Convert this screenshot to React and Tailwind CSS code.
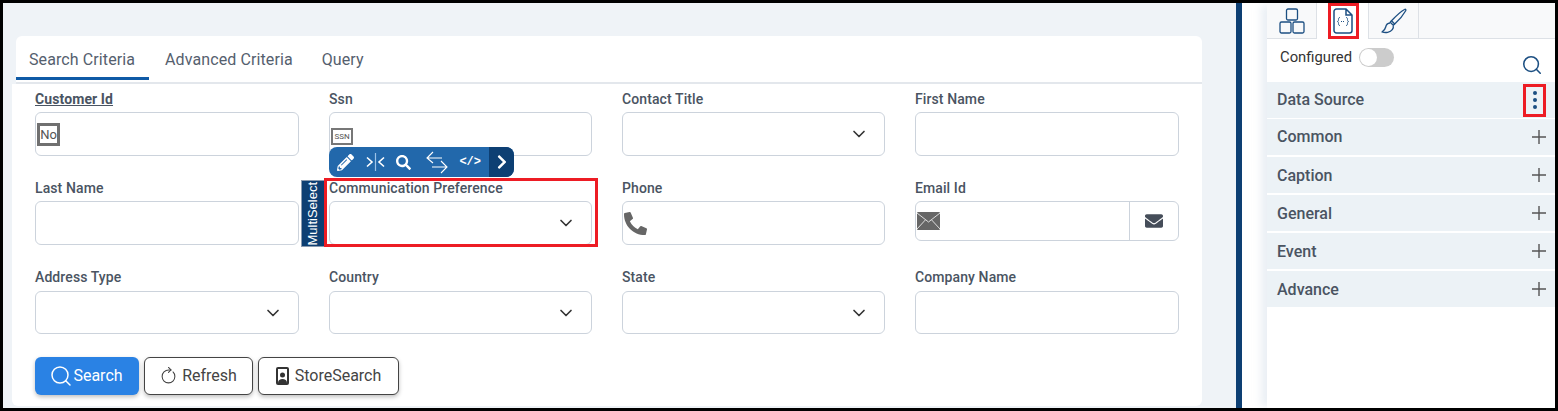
import React from 'react';
import { FaPencilAlt, FaSearch, FaChevronRight, FaEnvelope, FaPhoneAlt } from 'react-icons/fa';
import { LuChevronDown, LuSearch, LuRotateCw } from 'react-icons/lu';

const NoBox = () => (
  <span className="ml-[1px] mt-[1px] flex h-[23px] w-[23px] items-center justify-center border-[3px] border-[#707070] bg-white text-[13px] leading-none text-[#555]">
    No
  </span>
);

const SsnBox = () => (
  <span className="ml-[1px] mt-[5px] flex h-[17px] w-[22px] items-center justify-center border-2 border-[#777] bg-white text-[8px] leading-none text-[#555]">
    SSN
  </span>
);

const PhoneIcon = () => (
  <FaPhoneAlt className="ml-[1px] mt-[1px] h-[23px] w-[23px] text-[#666]" />
);

const MailIcon = () => (
  <svg className="ml-[1px] h-[18px] w-[23px]" viewBox="0 0 23 18">
    <rect width="23" height="18" rx="1" fill="#666" />
    <path d="M0 1l11.500 9L23 1M0 17l8.500-9.200M23 17l-8.500-9.200" stroke="#ddd" strokeWidth="1" fill="none" />
  </svg>
);

const Chevron = () => (
  <LuChevronDown className="absolute right-[15px] top-1/2 h-[20px] w-[20px] -translate-y-1/2 text-[#333]" />
);

const fields = [
  { label: 'Customer Id', h: 'h-[44px]', icon: <NoBox />, bold: true },
  { label: 'Ssn', h: 'h-[44px]', icon: <SsnBox /> },
  { label: 'Contact Title', h: 'h-[44px]', select: true },
  { label: 'First Name', h: 'h-[44px]' },
  { label: 'Last Name', h: 'h-[44px]' },
  { label: 'Communication Preference', h: 'h-[44px]', select: true },
  { label: 'Phone', h: 'h-[44px]', icon: <PhoneIcon /> },
  { label: 'Email Id', h: 'h-[44px]', email: true },
  { label: 'Address Type', h: 'h-[43px]', select: true, tall: true },
  { label: 'Country', h: 'h-[43px]', select: true, tall: true },
  { label: 'State', h: 'h-[43px]', select: true, tall: true },
  { label: 'Company Name', h: 'h-[43px]', tall: true },
];

const Field = ({ field }) => (
  <div>
    <div
      className={`pt-[4px] text-[14px] leading-[18px] tracking-[0.1px] text-[#4a5462] ${
        field.tall ? 'h-[27px]' : 'h-[26px]'
      } ${field.bold ? 'font-bold underline' : 'font-medium'}`}
    >
      {field.label}
    </div>
    {field.email ? (
      <div className="flex h-[40px] rounded-md border border-[#ccd3dc] bg-white">
        <div className="flex flex-1 items-center border-r border-[#ccd3dc]">
          <MailIcon />
        </div>
        <div className="flex w-[48px] items-center justify-center">
          <FaEnvelope className="h-[18px] w-[18px] text-[#454d59]" />
        </div>
      </div>
    ) : (
      <div className={`relative flex items-center rounded-md border border-[#ccd3dc] bg-white ${field.h}`}>
        {field.icon}
        {field.select && <Chevron />}
      </div>
    )}
  </div>
);

const ElementToolbar = () => (
  <div className="absolute left-[326px] top-[144px] flex h-[30px] w-[185px] overflow-hidden rounded-[8px] bg-[#2268ab] text-white">
    <div className="flex flex-1 items-center justify-between pl-[8px] pr-[8px]">
      <FaPencilAlt className="h-[17px] w-[17px]" />
      <svg className="h-[20px] w-[19px]" viewBox="0 0 19 20" fill="none" stroke="white" strokeWidth="1.6">
        <path d="M1 5.500l5 4.500-5 4.500M18 5.500l-5 4.500 5 4.500" />
        <path d="M9.500 1v18" stroke="#9cc3e8" strokeWidth="1.2" />
      </svg>
      <FaSearch className="h-[15px] w-[15px]" />
      <svg className="ml-[3px] h-[26px] w-[22px]" viewBox="0 0 22 26" fill="none" stroke="white" strokeWidth="1.1">
        <path d="M7 3L1 9l6 5M1 9h15M15 12l6 6-6 6M21 18H6" />
      </svg>
      <span className="font-mono text-[12px] font-bold leading-none">&lt;/&gt;</span>
    </div>
    <div className="flex w-[25px] items-center justify-center bg-[#0d3f73]">
      <FaChevronRight className="h-[16px] w-[12px]" />
    </div>
  </div>
);

const panelRows = ['Data Source', 'Common', 'Caption', 'General', 'Event', 'Advance'];

const SidePanel = () => (
  <div className="relative flex w-[288px] flex-col bg-white shadow-[-8px_0_8px_-2px_rgba(225,232,240,0.7)]">
    <div className="flex h-[36px] border-b border-[#dde1e6] bg-[#f8f9fa]">
      <div className="flex w-[50px] items-center justify-center border-r border-[#dde1e6]">
        <svg className="h-[26px] w-[26px]" viewBox="0 0 26 26" fill="none" stroke="#1c4f82" strokeWidth="1.3">
          <rect x="7.500" y="1" width="11" height="11" rx="1.500" />
          <rect x="1" y="14" width="11" height="11" rx="1.500" />
          <rect x="14" y="14" width="11" height="11" rx="1.500" />
        </svg>
      </div>
      <div className="flex h-[36px] w-[52px] items-center justify-center border-r border-[#dde1e6] bg-white">
        <svg className="mt-[-1px] h-[26px] w-[20px]" viewBox="0 0 20 26" fill="none" stroke="#1c4f82" strokeWidth="1.500">
          <path d="M3.500 1H13l6 6v15.500a2.500 2.500 0 0 1-2.500 2.500h-13A2.500 2.500 0 0 1 1 22.500v-19A2.500 2.500 0 0 1 3.500 1zM13 1v6h6" />
          <path d="M7 9.500c-1.500 0-1.500 1-1.500 2 0 1.500-.5 2-1 2 .5 0 1 .5 1 2 0 1 0 2 1.500 2M13 9.500c1.500 0 1.500 1 1.500 2 0 1.500.5 2 1 2-.5 0-1 .5-1 2 0 1 0 2-1.500 2" strokeWidth="0.9" />
          <path d="M8 13.500h4" strokeWidth="1" strokeDasharray="1 1" />
        </svg>
      </div>
      <div className="flex w-[50px] items-center justify-center border-r border-[#dde1e6]">
        <svg className="h-[26px] w-[26px]" viewBox="0 0 26 26" fill="none" stroke="#1c4f82" strokeWidth="1.300" strokeLinejoin="round">
          <path d="M23.500 1.500c1-.6 1.800.2 1.200 1.200-2 3.600-6.500 9.200-11 13.300l-3.200-3.200c4.200-4.500 9.400-9.300 13-11.300z" />
          <path d="M10.500 12.800l-1.300 1.400 3.100 3.100 1.400-1.300" />
          <path d="M9 15c-2.800.3-3.900 2-4.300 4-.3 1.600-1.500 3.400-3.700 5 3.500 1 8.300.6 10.300-2.300 1-1.500 1.200-3.100.9-4" />
        </svg>
      </div>
    </div>
    <div className="relative h-[43px]">
      <div className="flex items-center pl-[13px] pt-[8px]">
        <span className="text-[14.800px] leading-[20px] text-[#333]">Configured</span>
        <span className="ml-[7px] flex h-[19px] w-[35px] items-center rounded-full bg-[#cccccc] pl-[1px]">
          <span className="h-[17px] w-[17px] rounded-full bg-white" />
        </span>
      </div>
      <LuSearch className="absolute right-[12px] top-[15px] h-[22px] w-[22px] text-[#1c4f82]" strokeWidth={1.700} />
    </div>
    {panelRows.map((row, i) => (
      <div
        key={row}
        className={`flex h-[36px] items-center justify-between bg-[#ecf2f6] pl-[10px] pr-[9px] text-[16px] font-medium text-[#4a5462] ${
          i === 0 ? 'mb-[1px]' : 'mb-[2px]'
        }`}
      >
        <span className={i >= 2 ? 'pt-[2px]' : ''}>{row}</span>
        {i === 0 ? (
          <span className="mr-[9px] flex flex-col gap-[3px]">
            <span className="h-[4px] w-[4px] rounded-full bg-[#1c4f82]" />
            <span className="h-[4px] w-[4px] rounded-full bg-[#1c4f82]" />
            <span className="h-[4px] w-[4px] rounded-full bg-[#1c4f82]" />
          </span>
        ) : (
          <svg className="h-[14px] w-[14px]" viewBox="0 0 14 14" stroke="#555" strokeWidth="1.400">
            <path d="M7 0v14M0 7h14" />
          </svg>
        )}
      </div>
    ))}
    {/* red call-outs on the panel */}
    <div className="pointer-events-none absolute left-[61px] top-0 h-[36px] w-[31px] border-[3px] border-[#ed1c24]" />
    <div className="pointer-events-none absolute left-[256px] top-[81px] h-[33px] w-[23px] border-[3px] border-[#ed1c24]" />
  </div>
);

export default function App() {
  return (
    <div className="relative flex h-[411px] w-[1558px] overflow-hidden border-[3px] border-black font-['Roboto',sans-serif]">
      <div className="flex w-[1233px] bg-[#eff3f7] pl-[9px] pt-[33px]">
        <div className="w-[1190px]">
          <div className="ml-[4px] flex h-[48px] rounded-t-md border-b-2 border-[#e3e7ec] bg-white">
            {['Search Criteria', 'Advanced Criteria', 'Query'].map((tab, i) => (
              <div
                key={tab}
                className={`mr-[3px] flex h-[44px] items-center border-b-[3px] pl-[13px] pt-[7px] text-[16px] tracking-[0.1px] text-[#55606e] ${
                  i === 0 ? 'border-[#0f5aa6] pr-[14px]' : 'border-transparent pr-[13px]'
                }`}
              >
                {tab}
              </div>
            ))}
          </div>
          <div className="h-[322px] rounded-b-md bg-white pl-[23px] pr-[23px] pt-[2px]">
            <div className="grid grid-cols-[264px_263px_263px_264px] gap-x-[30px] gap-y-[19px]">
              {fields.map((field) => (
                <Field key={field.label} field={field} />
              ))}
            </div>
            <div className="mt-[23px] flex gap-[5px]">
              <button className="flex h-[38px] w-[104px] items-center justify-center rounded-md bg-[#2a82e4] pr-[2px] text-[16px] text-white shadow-[0_2px_4px_rgba(0,0,0,0.25)]">
                <LuSearch className="h-[24px] w-[24px]" strokeWidth={1.500} />
                Search
              </button>
              <button className="flex h-[38px] w-[109px] items-center justify-center gap-[5px] rounded-md border border-[#444] bg-white text-[16px] text-[#444] shadow-[0_2px_4px_rgba(0,0,0,0.25)]">
                <LuRotateCw className="h-[17px] w-[17px] -rotate-45" strokeWidth={1.500} />
                Refresh
              </button>
              <button className="flex h-[38px] w-[141px] items-center justify-center gap-[6px] rounded-md border border-[#444] bg-white text-[16px] text-[#444] shadow-[0_2px_4px_rgba(0,0,0,0.25)]">
                <svg className="h-[18px] w-[13px]" viewBox="0 0 13 18">
                  <rect width="13" height="18" rx="2" fill="#333" />
                  <rect x="2" y="2" width="9" height="14" fill="#fff" />
                  <circle cx="6.500" cy="8" r="2.500" fill="#333" />
                  <path d="M2 16c0-3 2-4 4.500-4s4.500 1 4.500 4z" fill="#333" />
                </svg>
                StoreSearch
              </button>
            </div>
          </div>
        </div>
      </div>
      <div className="w-[6px] bg-[#0d3f73]" />
      <div className="w-[25px] bg-white" />
      <SidePanel />

      {/* hover tools around the selected control */}
      <ElementToolbar />
      <div className="absolute left-[298px] top-[177px] flex h-[67px] w-[24px] items-center justify-center border border-[#8a9bb0] bg-[#0d3f73]">
        <span className="-rotate-90 whitespace-nowrap font-['Liberation_Sans',sans-serif] text-[13px] text-white">MultiSelect</span>
      </div>
      <div className="pointer-events-none absolute left-[321px] top-[175px] h-[69px] w-[274px] border-[3px] border-[#ed1c24]" />
    </div>
  );
}
